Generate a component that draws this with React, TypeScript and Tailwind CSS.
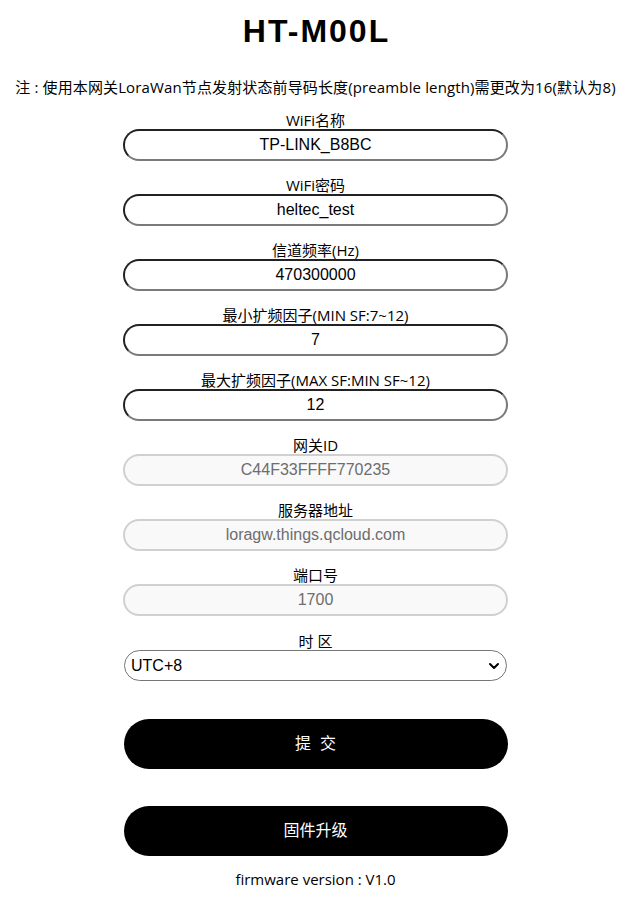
const fields = [
  { label: 'WiFi名称', value: 'TP-LINK_B8BC' },
  { label: 'WiFi密码', value: 'heltec_test' },
  { label: '信道频率(Hz)', value: '470300000' },
  { label: '最小扩频因子(MIN SF:7~12)', value: '7' },
  { label: '最大扩频因子(MAX SF:MIN SF~12)', value: '12' },
  { label: '网关ID', value: 'C44F33FFFF770235', disabled: true },
  { label: '服务器地址', value: 'loragw.things.qcloud.com', disabled: true },
  { label: '端口号', value: '1700', disabled: true },
]

const labelFont = { fontFamily: '"Open Sans", "Noto Sans CJK SC", sans-serif' }

function Field({ label, value, disabled }: { label: string; value: string; disabled?: boolean }) {
  return (
    <div className="flex flex-col items-center mb-[16px]">
      <label className="text-[15px] leading-[17px] text-black" style={labelFont}>
        {label}
      </label>
      <input
        readOnly
        disabled={disabled}
        value={value}
        className={
          disabled
            ? 'w-[385px] h-[32px] rounded-full border-2 border-[#d0d0d0] bg-[#f9f9f9] text-center text-[16px] text-[#6d6d6d] outline-none'
            : 'w-[385px] h-[32px] rounded-full border-2 border-t-[#222] border-l-[#222] border-b-[#7a7a7a] border-r-[#7a7a7a] bg-white text-center text-[16px] text-black outline-none'
        }
      />
    </div>
  )
}

export default function App() {
  return (
    <div
      className="min-h-[902px] w-[631px] bg-white text-black flex flex-col items-center"
      style={{ fontFamily: '"Liberation Sans", "Noto Sans CJK SC", sans-serif' }}
    >
      <h1 className="pt-[13px] pl-[2px] text-[32px] leading-[37px] font-bold tracking-[2px]">HT-M00L</h1>
      <p className="mt-[29px] text-[15px] leading-[17px] whitespace-nowrap tracking-[0.13px]" style={labelFont}>
        注 : 使用本网关LoraWan节点发射状态前导码长度(preamble length)需更改为16(默认为8)
      </p>
      <div className="mt-[16px] flex flex-col items-center">
        {fields.map((f) => (
          <Field key={f.label} {...f} />
        ))}
        <div className="flex flex-col items-center mt-[1px]">
          <label className="text-[15px] leading-[17px]" style={labelFont}>
            时 区
          </label>
          <div className="relative w-[383px] h-[31px] rounded-full border border-[#767676] flex items-center px-[6px] text-[16px]">
            <span>UTC+8</span>
            <svg className="absolute right-[6px] top-[10px] w-[12px] h-[10px]" viewBox="0 0 12 10" fill="none">
              <path d="M2 3l4 4 4-4" stroke="#000" strokeWidth="2" strokeLinecap="round" strokeLinejoin="round" />
            </svg>
          </div>
        </div>
        <button className="mt-[38px] w-[384px] h-[50px] rounded-full bg-black text-white text-[16px]">
          提&nbsp;&nbsp;交
        </button>
        <button className="mt-[37px] w-[384px] h-[50px] rounded-full bg-black text-white text-[16px]">
          固件升级
        </button>
        <p className="mt-[15px] text-[15px] leading-[17px]" style={labelFont}>
          firmware version : V1.0
        </p>
      </div>
    </div>
  )
}
